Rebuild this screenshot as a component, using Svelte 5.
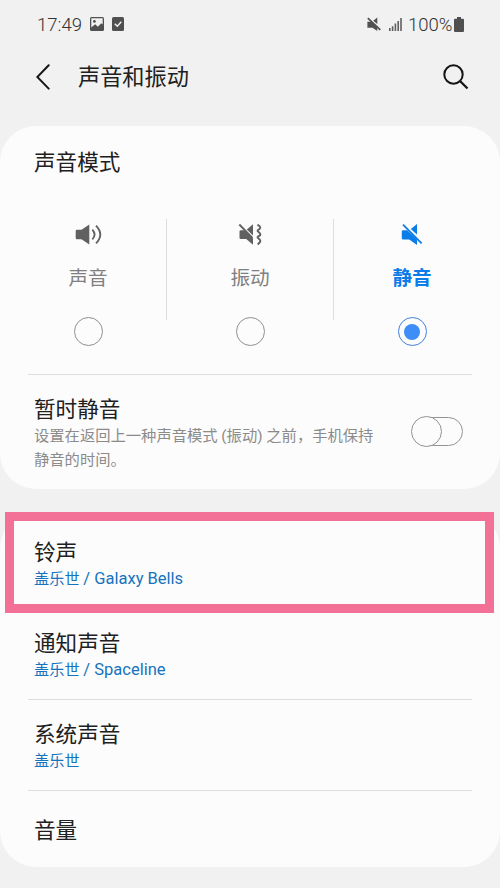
<script lang="ts">
  let mode = $state("mute");
  let muteForNow = $state(false);

  const modes = [
    { id: "sound", label: "声音" },
    { id: "vibrate", label: "振动" },
    { id: "mute", label: "静音" }
  ];

  const sounds = [
    { title: "铃声", theme: "盖乐世", tone: "/ Galaxy Bells", marked: true },
    { title: "通知声音", theme: "盖乐世", tone: "/ Spaceline" },
    { title: "系统声音", theme: "盖乐世", tone: "" }
  ];
</script>

<div class="screen">
  <div class="status">
    <span class="time">17:49</span>
    <svg class="picture" width="14" height="14" viewBox="0 0 14 14">
      <rect width="14" height="14" rx="1.5" fill="#505050" />
      <path d="M1.3 1.3h11.4v6.2l-1.4-1.2-3.4 3.4-2.8-2.4-3.8 3.3z" fill="#f1f1f1" />
      <circle cx="4.4" cy="4.4" r="1.4" fill="#505050" />
    </svg>
    <svg class="check" width="12" height="14" viewBox="0 0 12 14">
      <rect width="12" height="14" rx="1.5" fill="#505050" />
      <path d="M2.8 6.8l2.5 2.4 4-4.4" fill="none" stroke="#f1f1f1" stroke-width="1.5" />
    </svg>
    <span class="spacer"></span>
    <svg class="muted" width="14" height="15" viewBox="0 0 14 15" fill="#505050">
      <path d="M.4 4.8H4.500L10.300 10.500V14L5.500 10.800H.4z M6.300 3.800L10.300.5v6.400z" />
      <path d="M.8 1.200L13.300 12.800" stroke="#505050" stroke-width="1.700" />
    </svg>
    <svg class="signal" width="13" height="13" viewBox="0 0 13 13" fill="#606060">
      <path d="M0 10h1.6v3H0zM2.8 8.2h1.6V13H2.8zM5.6 5.6h1.6V13H5.6zM8.4 3h1.6v10H8.4zM11.2 0h1.6v13h-1.6z" />
    </svg>
    <span class="percent">100%</span>
    <svg class="battery" width="10" height="15" viewBox="0 0 10 15">
      <path d="M3 0h4v1.8h2q1 0 1 1V14q0 1-1 1H1q-1 0-1-1V2.8q0-1 1-1h2z" fill="#505050" />
    </svg>
  </div>

  <header>
    <svg width="14" height="26" viewBox="0 0 14 26" fill="none" stroke="#151515" stroke-width="2" stroke-linecap="round">
      <path d="M12.7 1.3L1.3 13l11.4 11.6" />
    </svg>
    <h1>声音和振动</h1>
    <svg width="26" height="26" viewBox="0 0 26 26" fill="none" stroke="#151515" stroke-width="2">
      <circle cx="10.5" cy="10.5" r="9.2" />
      <path d="M17 17l7.5 7.5" stroke-width="2.3" />
    </svg>
  </header>

  <section class="card modes-card">
    <h2>声音模式</h2>
    <div class="modes">
      {#each modes as m, i}
        {#if i > 0}<span class="line"></span>{/if}
        <button class="mode" class:active={mode === m.id} onclick={() => (mode = m.id)}>
          <svg width="28" height="24" viewBox="0 0 28 24" fill="currentColor">
            {#if m.id === "sound"}
              <path d="M3 6.800h4.500L15.300 1.500v20L7.500 16.200H3q-1.300 0-1.300-1.300V8.100q0-1.300 1.300-1.300z" />
              <path d="M18.300 6.600q4.600 4.900 0 9.800M22 2.600q8.600 8.900 0 17.800" fill="none" stroke="currentColor" stroke-width="1.800" />
            {:else if m.id === "vibrate"}
              <path d="M4.800 7.300h4L17 15.500v6.300L10.200 16H4.800q-1.300 0-1.300-1.300V8.600q0-1.300 1.300-1.300z M10.800 6.400L17 1.300v11.300z" />
              <path d="M3.300 1.500L16.500 15" stroke="currentColor" stroke-width="1.800" />
              <path d="M21.500 1.600q2.800 1.700 2.800 3t-2 2.200q-1.500.9 0 1.900t2 2.300t-2 2.300q-1.500.9 0 1.900t2 2.300t-2.600 4" fill="none" stroke="currentColor" stroke-width="1.900" />
            {:else}
              <path d="M5.100 7.200h4L19 16.600v5.400L11.200 16.500H5.100q-1.300 0-1.300-1.300V8.500q0-1.300 1.300-1.300z M12.800 6L19 1v10.500z" />
              <path d="M5 1.600L23.600 20.400" stroke="currentColor" stroke-width="1.800" />
            {/if}
          </svg>
          <span class="label">{m.label}</span>
          <span class="radio"></span>
        </button>
      {/each}
    </div>
    <hr />
    <div class="temporary">
      <div class="text">
        <h2>暂时静音</h2>
        <p>设置在返回上一种声音模式 (振动) 之前，手机保持静音的时间。</p>
      </div>
      <button class="switch" class:on={muteForNow} aria-label="暂时静音" onclick={() => (muteForNow = !muteForNow)}>
        <span class="knob"></span>
      </button>
    </div>
  </section>

  <section class="card list">
    {#each sounds as sound, i}
      {#if i > 1}<hr />{/if}
      <div class="row" class:marked={sound.marked}>
        <h2>{sound.title}</h2>
        <p>{sound.theme} <span class="tone">{sound.tone}</span></p>
      </div>
    {/each}
    <hr />
    <div class="row volume"><h2>音量</h2></div>
  </section>
</div>

<style>
  :global(body) {
    background: #f1f1f1;
  }

  .screen {
    height: 888px;
    box-sizing: border-box;
    overflow: hidden;
    font-family: Roboto, "Noto Sans CJK SC", sans-serif;
    background: #f1f1f1;
    color: #202020;
  }

  h1, h2, p {
    margin: 0;
    font-weight: 400;
  }

  button {
    padding: 0;
    border: none;
    background: none;
    font: inherit;
    cursor: pointer;
  }

  hr {
    height: 1px;
    margin: 0 28px;
    border: none;
    background: #dedede;
  }

  .status {
    display: flex;
    align-items: center;
    height: 48px;
    padding: 0 36px 0 37px;
    font-size: 18.5px;
    font-weight: 300;
    color: #333;
  }

  .time {
    width: 53px;
    padding-top: 1px;
  }

  .check {
    margin-left: 8px;
  }

  .spacer {
    flex: 1;
  }

  .signal {
    margin: 0 6px 0 8px;
  }

  .percent {
    width: 46px;
    padding-top: 1px;
  }

  header {
    display: flex;
    align-items: center;
    height: 56px;
    padding: 1px 31px 21px 36px;
  }

  h1 {
    flex: 1;
    margin-left: 28px;
    font-size: 22.2px;
    line-height: 30px;
  }

  h2 {
    font-size: 21.6px;
    line-height: 30px;
  }

  .card {
    border-radius: 36px;
    background: #fcfcfc;
  }

  .modes-card {
    height: 363px;
  }

  .modes-card > h2 {
    padding: 22px 34px 0;
  }

  .modes {
    display: grid;
    grid-template-columns: 156px 1px 166px 1px 156px;
    justify-content: center;
    height: 155px;
    margin-top: 41px;
  }

  .line {
    height: 101px;
    background: #dedede;
  }

  .mode {
    display: flex;
    flex-direction: column;
    align-items: center;
    padding-top: 4px;
    height: 130px;
    color: #606060;
  }

  .label {
    margin-top: 17px;
    font-size: 19.6px;
    line-height: 30px;
    color: #808080;
  }

  .radio {
    display: flex;
    box-sizing: border-box;
    width: 29px;
    height: 29px;
    margin-top: 23px;
    border: 1.4px solid #909090;
    border-radius: 50%;
  }

  .active {
    color: #0b7de8;
  }

  .active .label {
    font-weight: 700;
    color: #0b7de8;
  }

  .active .radio {
    border-color: #4080e0;
  }

  .active .radio::after {
    content: "";
    width: 16px;
    height: 16px;
    margin: auto;
    border-radius: 50%;
    background: #3e8ef7;
  }

  .temporary {
    display: flex;
    justify-content: space-between;
    align-items: flex-start;
    padding: 20px 37px 0 34px;
  }

  .text {
    width: 346px;
  }

  .text p {
    font-size: 15.3px;
    line-height: 23.5px;
    color: #8b8b8b;
  }

  .switch {
    display: flex;
    align-items: center;
    box-sizing: border-box;
    width: 51px;
    height: 29px;
    margin-top: 22px;
    border: 1px solid #939393;
    border-radius: 15px;
  }

  .knob {
    box-sizing: border-box;
    width: 31px;
    height: 31px;
    flex: none;
    margin-left: -2px;
    border: 1px solid #939393;
    border-radius: 50%;
    background: #fcfcfc;
  }

  .on .knob {
    margin-left: 20px;
  }

  .list {
    height: 355px;
    margin-top: 24px;
  }

  .row {
    box-sizing: border-box;
    height: 90px;
    padding: 20px 34px 0;
  }

  .row p {
    font-size: 15.2px;
    line-height: 22px;
    color: #1673bd;
  }

  .tone {
    font-size: 16.5px;
  }

  .marked {
    height: 101px;
    margin: -1px 6px -4px 5px;
    padding: 17px 20px 0;
    border: 9px solid #f37196;
  }

  .volume {
    height: 77px;
    padding-top: 25px;
  }
</style>
